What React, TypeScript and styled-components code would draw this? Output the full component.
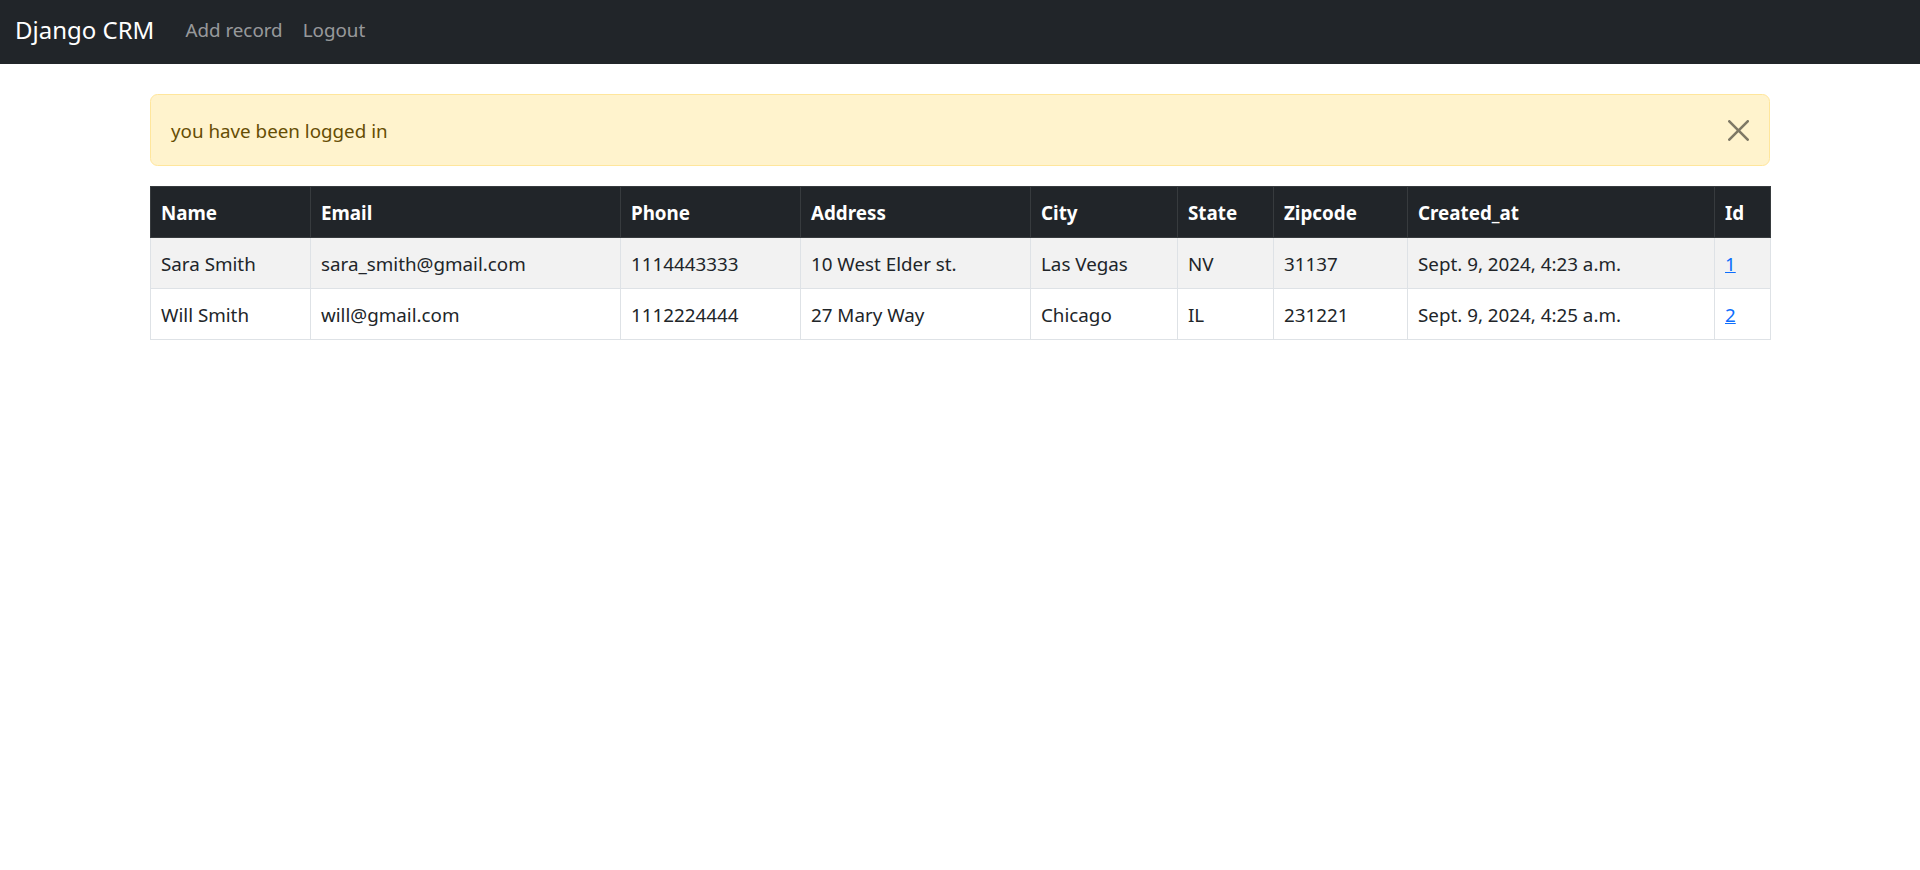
import React from "react";
import styled, { createGlobalStyle } from "styled-components";

const GlobalStyle = createGlobalStyle`
  *, *::before, *::after { box-sizing: border-box; }
  body {
    margin: 0;
    background: #fff;
    color: #212529;
    font-family: "Noto Sans", "Open Sans", sans-serif;
    font-size: 18.8px;
    line-height: 30px;
  }
`;

const Navbar = styled.nav`
  height: 64px;
  background: #212529;
  display: flex;
  align-items: center;
  padding: 0 15px 5px;
`;

const Brand = styled.a`
  color: #fff;
  font-size: 24px;
  line-height: 37px;
  text-decoration: none;
  margin-right: 21px;
`;

const NavLinks = styled.div`
  display: flex;
  align-items: center;
`;

const NavLink = styled.a`
  color: rgba(255, 255, 255, 0.55);
  padding: 0 10px;
  text-decoration: none;
`;

const Container = styled.main`
  width: 1620px;
  margin: 30px auto 0;
`;

const Alert = styled.div`
  display: flex;
  align-items: center;
  justify-content: space-between;
  background: #fff3cd;
  border: 1px solid #ffe69c;
  color: #664d03;
  border-radius: 7.5px;
  padding: 20px;
  margin-bottom: 20px;
`;

const AlertText = styled.span`
  position: relative;
  top: 1px;
`;

const CloseButton = styled.button`
  width: 21px;
  height: 21px;
  padding: 0;
  border: 0;
  background: transparent;
  opacity: 0.5;
  display: flex;
  cursor: pointer;
  svg { width: 21px; height: 21px; }
`;

const Table = styled.table`
  width: 100%;
  table-layout: fixed;
  border-collapse: collapse;
  border: 1px solid #dee2e6;
`;

const Th = styled.th`
  background: #212529;
  color: #fff;
  font-weight: 700;
  text-align: left;
  padding: 11px 10px 9px;
  border: 1px solid #373b3e;
  white-space: nowrap;
`;

const Tr = styled.tr<{ $striped?: boolean }>`
  background: ${(p) => (p.$striped ? "#f2f2f2" : "#fff")};
`;

const Td = styled.td`
  padding: 11px 10px 9px;
  border: 1px solid #dee2e6;
  white-space: nowrap;
  color: #212529;
`;

const IdLink = styled.a`
  color: #0d6efd;
  text-decoration: underline;
`;

const columns = [
  { title: "Name", width: 160 },
  { title: "Email", width: 310 },
  { title: "Phone", width: 180 },
  { title: "Address", width: 230 },
  { title: "City", width: 147 },
  { title: "State", width: 96 },
  { title: "Zipcode", width: 134 },
  { title: "Created_at", width: 307 },
  { title: "Id", width: 56 },
];

const records = [
  {
    id: 1,
    name: "Sara Smith",
    email: "sara_smith@gmail.com",
    phone: "1114443333",
    address: "10 West Elder st.",
    city: "Las Vegas",
    state: "NV",
    zipcode: "31137",
    created: "Sept. 9, 2024, 4:23 a.m.",
  },
  {
    id: 2,
    name: "Will Smith",
    email: "will@gmail.com",
    phone: "1112224444",
    address: "27 Mary Way",
    city: "Chicago",
    state: "IL",
    zipcode: "231221",
    created: "Sept. 9, 2024, 4:25 a.m.",
  },
];

export default function App() {
  return (
    <>
      <GlobalStyle />
      <Navbar>
        <Brand href="#">Django CRM</Brand>
        <NavLinks>
          <NavLink href="#">Add record</NavLink>
          <NavLink href="#">Logout</NavLink>
        </NavLinks>
      </Navbar>
      <Container>
        <Alert>
          <AlertText>you have been logged in</AlertText>
          <CloseButton aria-label="Close">
            <svg viewBox="0 0 16 16" fill="#000">
              <path d="M.293.293a1 1 0 0 1 1.414 0L8 6.586 14.293.293a1 1 0 1 1 1.414 1.414L9.414 8l6.293 6.293a1 1 0 0 1-1.414 1.414L8 9.414l-6.293 6.293a1 1 0 0 1-1.414-1.414L6.586 8 .293 1.707a1 1 0 0 1 0-1.414z" />
            </svg>
          </CloseButton>
        </Alert>
        <Table>
          <colgroup>
            {columns.map((c) => (
              <col key={c.title} width={c.width} />
            ))}
          </colgroup>
          <thead>
            <tr>
              {columns.map((c) => (
                <Th key={c.title}>{c.title}</Th>
              ))}
            </tr>
          </thead>
          <tbody>
            {records.map((r, i) => (
              <Tr key={r.id} $striped={i % 2 === 0}>
                <Td>{r.name}</Td>
                <Td>{r.email}</Td>
                <Td>{r.phone}</Td>
                <Td>{r.address}</Td>
                <Td>{r.city}</Td>
                <Td>{r.state}</Td>
                <Td>{r.zipcode}</Td>
                <Td>{r.created}</Td>
                <Td>
                  <IdLink href="#">{r.id}</IdLink>
                </Td>
              </Tr>
            ))}
          </tbody>
        </Table>
      </Container>
    </>
  );
}
